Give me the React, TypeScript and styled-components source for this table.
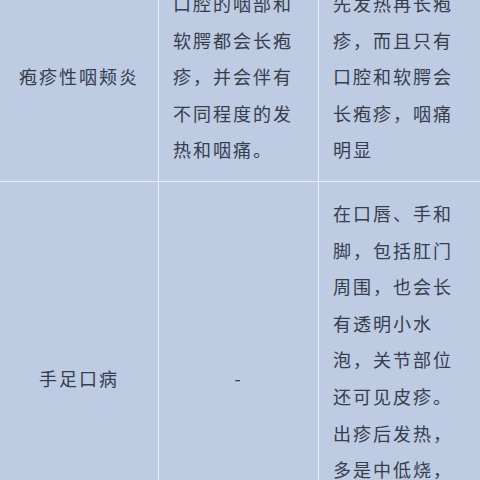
import React from "react";
import styled, { createGlobalStyle } from "styled-components";

const GlobalStyle = createGlobalStyle`
  html, body {
    margin: 0;
    padding: 0;
    background: #bdcbe3;
    overflow: hidden;
  }
`;

type Row = {
  name: string;
  herpangina: string[];
  detail: string[];
};

const rows: Row[] = [
  {
    name: "疱疹性咽颊炎",
    herpangina: ["口腔的咽部和", "软腭都会长疱", "疹，并会伴有", "不同程度的发", "热和咽痛。"],
    detail: ["先发热再长疱", "疹，而且只有", "口腔和软腭会", "长疱疹，咽痛", "明显"],
  },
  {
    name: "手足口病",
    herpangina: ["-"],
    detail: [
      "在口唇、手和",
      "脚，包括肛门",
      "周围，也会长",
      "有透明小水",
      "泡，关节部位",
      "还可见皮疹。",
      "出疹后发热，",
      "多是中低烧，",
      "少数患儿出现",
      "高热。",
    ],
  },
];

export default function App() {
  return (
    <>
      <GlobalStyle />
      <Table>
        {rows.map((row) => (
          <React.Fragment key={row.name}>
            <Cell $align="center">
              <Line>{row.name}</Line>
            </Cell>
            <Cell $align={row.herpangina.length === 1 ? "center" : "left"}>
              {row.herpangina.map((l, i) => (
                <Line key={i}>{l}</Line>
              ))}
            </Cell>
            <Cell $align="left" $last>
              {row.detail.map((l, i) => (
                <Line key={i}>{l}</Line>
              ))}
            </Cell>
          </React.Fragment>
        ))}
      </Table>
    </>
  );
}

const Table = styled.div`
  display: grid;
  grid-template-columns: 159px 160px 1fr;
  width: 480px;
  margin-top: -28px;
  background: #bdcbe3;
  font-family: "Noto Sans CJK SC", "Noto Sans", sans-serif;
  font-size: 18px;
  line-height: 36.6px;
  letter-spacing: 2px;
  color: #363d4b;
`;

const Cell = styled.div<{ $align: "left" | "center"; $last?: boolean }>`
  display: flex;
  flex-direction: column;
  justify-content: center;
  align-items: ${(p) => (p.$align === "center" ? "center" : "flex-start")};
  padding: 13px 14px;
  border-right: ${(p) => (p.$last ? "none" : "1.5px solid #e9eff8")};
  border-bottom: 1.5px solid #e9eff8;
`;

const Line = styled.span`
  display: block;
  white-space: nowrap;
`;
